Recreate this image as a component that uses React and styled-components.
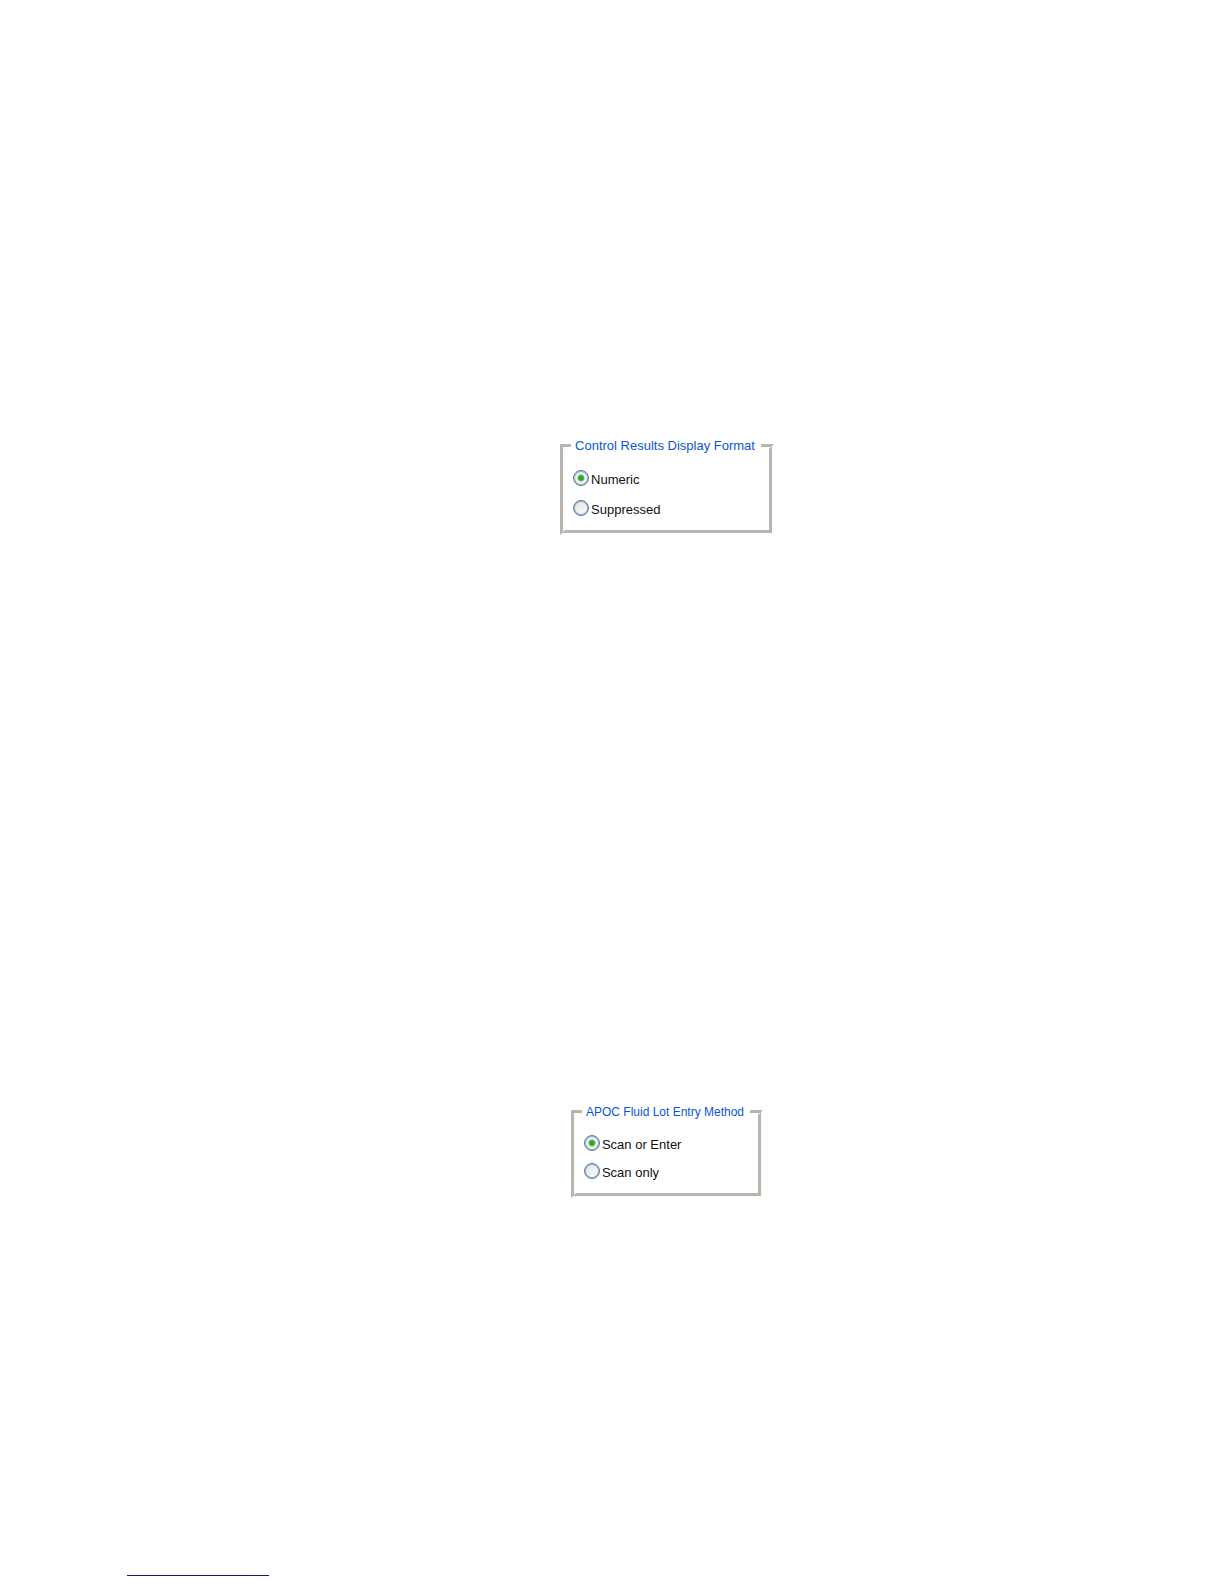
import React from 'react';
import styled, { createGlobalStyle } from 'styled-components';

const GlobalStyle = createGlobalStyle`
  body {
    margin: 0;
    background: #fff;
    font-family: "Liberation Sans", Arial, sans-serif;
  }
`;

const Page = styled.main`
  box-sizing: border-box;
  display: flex;
  flex-direction: column;
  min-height: 100vh;
  padding: 438px 17px 8px 127px;
`;

const Settings = styled.div`
  display: flex;
  flex-direction: column;
  align-items: center;
  gap: 569px;
  flex: 1;
`;

const Panel = styled.fieldset`
  margin: 0;
  padding: ${props => (props.$compact ? 13 : 14)}px 8px 12px 6px;
  border: 5px groove rgba(255, 252, 244, 0.85);
`;

const Title = styled.legend`
  padding: 0 6px 0 4px;
  color: #0a55d5;
  font-size: ${props => (props.$compact ? 12 : 13)}px;
  line-height: 16px;
`;

const Options = styled.div`
  display: flex;
  flex-direction: column;
  gap: ${props => (props.$compact ? 8 : 10)}px;
  padding-left: 2px;
`;

const Option = styled.label`
  display: flex;
  align-items: center;
  gap: 2px;
  color: #111;
  font-size: 13px;
  line-height: 20px;
`;

const OptionText = styled.span`
  padding-top: 4px;
  line-height: 16px;
`;

const Radio = styled.input`
  appearance: none;
  box-sizing: border-box;
  width: 16px;
  height: 16px;
  margin: 0;
  border: 1px solid #55799f;
  border-radius: 50%;
  background: linear-gradient(135deg, #e2e2dc, #fff);
  box-shadow: inset 0 0 0 1px #98b4ce;

  &:checked {
    background:
      radial-gradient(circle, #2fa52d 0 2px, #62c25c 3px, transparent 4px),
      linear-gradient(135deg, #e8e8e2, #fff);
  }
`;

const FooterRule = styled.hr`
  width: 142px;
  height: 1px;
  margin: 0;
  border: 0;
  background: #15158c;
`;

const RadioPanel = ({ title, name, options, compact }) => (
  <Panel $compact={compact}>
    <Title $compact={compact}>{title}</Title>
    <Options $compact={compact}>
      {options.map((option, index) => (
        <Option key={option}>
          <Radio type="radio" name={name} value={option} defaultChecked={index === 0} />
          <OptionText>{option}</OptionText>
        </Option>
      ))}
    </Options>
  </Panel>
);

const App = () => (
  <>
    <GlobalStyle />
    <Page>
      <Settings>
        <RadioPanel
          title="Control Results Display Format"
          name="displayFormat"
          options={['Numeric', 'Suppressed']}
        />
        <RadioPanel
          compact
          title="APOC Fluid Lot Entry Method"
          name="entryMethod"
          options={['Scan or Enter', 'Scan only']}
        />
      </Settings>
      <FooterRule />
    </Page>
  </>
);

export default App;
